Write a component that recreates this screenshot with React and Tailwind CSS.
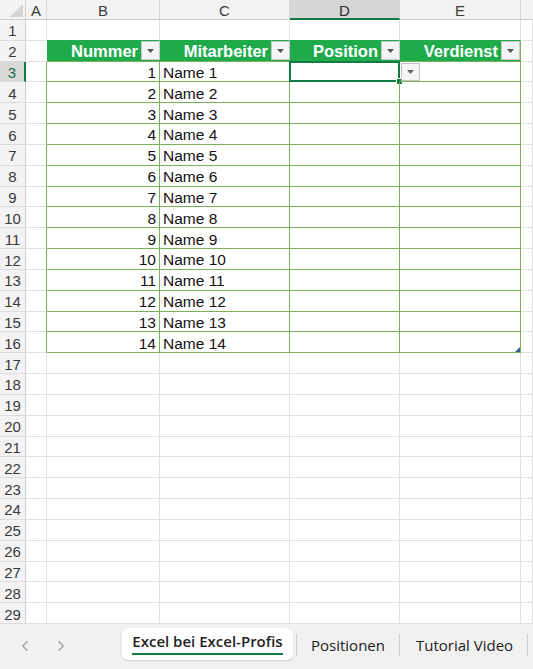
import { ChevronLeft, ChevronRight } from 'lucide-react';

/*
 * Excel sheet: a green table "Nummer / Mitarbeiter / Position / Verdienst"
 * with 14 rows, cell D3 selected, and the sheet tabs at the bottom.
 */

const ROW_H = 'h-[20.84px]';
const font = { fontFamily: '"Liberation Sans", Arial, sans-serif' };
const uiFont = { fontFamily: '"Open Sans", "Noto Sans", sans-serif' };

const rows = Array.from({ length: 29 }, (_, i) => i + 1);

function FilterButton() {
    return (
        <div className="w-[19px] h-[19px] shrink-0 bg-[#f4f4f4] border border-[#c9c9c9] flex items-center justify-center">
            <svg width="7" height="4" viewBox="0 0 7 4">
                <path d="M0 0 L7 0 L3.5 4 Z" fill="#555" />
            </svg>
        </div>
    );
}

function HeaderCell({ label, width, last }) {
    return (
        <div
            className={`${width} h-full flex items-center justify-end gap-[3px] bg-[#1fab4c] border-b border-[#78b35a] ${last ? 'border-r border-r-[#78b35a]' : ''}`}
        >
            <span className="text-white font-bold text-[16.5px] leading-none translate-y-[1px]" style={font}>{label}</span>
            <FilterButton />
        </div>
    );
}

function RowHeader({ n }) {
    const selected = n === 3;
    return (
        <div
            className={`w-[26px] shrink-0 h-full flex items-center justify-center pt-[2px] border-b border-[#dcdcdc] text-[15px] leading-none
            ${selected ? 'bg-[#d9d9d9] border-r-2 border-r-[#107c41] text-[#1d6b3e]' : 'bg-[#f3f3f3] border-r border-r-[#cfcfcf] text-[#3a3a3a]'}`}
            style={font}
        >
            {n}
        </div>
    );
}

function SheetRow({ n }) {
    const inTable = n >= 3 && n <= 16;
    const grid = 'border-r border-b border-[#e1e1e1]';
    const tbl = 'border-r border-b border-[#78b35a]';

    if (n === 2) {
        return (
            <div className={`flex ${ROW_H}`}>
                <RowHeader n={n} />
                <div className="w-[21px] h-full border-b border-[#e1e1e1]" />
                <HeaderCell label="Nummer" width="w-[113px]" />
                <HeaderCell label="Mitarbeiter" width="w-[130px]" />
                <HeaderCell label="Position" width="w-[110px]" />
                <HeaderCell label="Verdienst" width="w-[121px]" last />
                <div className={`flex-1 h-full ${grid}`} />
            </div>
        );
    }

    const bottomB = n === 1 ? 'border-r border-b border-r-[#e1e1e1] border-b-[#1fab4c]' : inTable ? tbl : grid;

    return (
        <div className={`flex ${ROW_H}`} style={font}>
            <RowHeader n={n} />
            <div className={`w-[21px] h-full border-r border-b border-b-[#e1e1e1] ${inTable ? 'border-r-[#78b35a]' : 'border-r-[#e1e1e1]'}`} />
            <div className={`w-[113px] h-full flex items-center justify-end pr-[3px] pt-[2px] text-[15.5px] text-[#111] ${bottomB}`}>
                {inTable ? n - 2 : ''}
            </div>
            <div className={`w-[130px] h-full flex items-center pl-[3px] pt-[2px] text-[15.5px] text-[#111] ${bottomB}`}>
                {inTable ? `Name ${n - 2}` : ''}
            </div>
            <div className={`w-[110px] h-full relative ${bottomB}`}>
                {n === 3 && (
                    <>
                        <div className="absolute -left-px -top-px -right-px -bottom-px border-2 border-[#107c41]" />
                        <div className="absolute -right-[4px] -bottom-[4px] w-[7px] h-[7px] bg-[#107c41] border border-white" />
                    </>
                )}
            </div>
            <div className={`w-[121px] h-full relative ${bottomB}`}>
                {n === 3 && (
                    <div className="absolute left-px top-[1px] w-[19px] h-[18px] bg-[#f6f6f6] border border-[#c3c3c3] flex items-center justify-center">
                        <svg width="7" height="4" viewBox="0 0 7 4">
                            <path d="M0 0 L7 0 L3.5 4 Z" fill="#666" />
                        </svg>
                    </div>
                )}
                {n === 16 && (
                    <svg className="absolute right-0 bottom-0" width="5" height="5" viewBox="0 0 5 5">
                        <path d="M5 0 L5 5 L0 5 Z" fill="#2f5f8f" />
                    </svg>
                )}
            </div>
            <div className={`flex-1 h-full ${grid}`} />
        </div>
    );
}

function ColumnHeaders() {
    const cols = [
        ['A', 'w-[21px]'],
        ['B', 'w-[113px]'],
        ['C', 'w-[130px]'],
        ['D', 'w-[110px]'],
        ['E', 'w-[121px]'],
    ];
    return (
        <div className="flex h-[20px]" style={font}>
            <div className="w-[26px] h-full bg-[#f3f3f3] border-r border-b border-[#cfcfcf] relative">
                <svg className="absolute right-[2px] bottom-[2px]" width="13" height="13" viewBox="0 0 13 13">
                    <path d="M13 0 L13 13 L0 13 Z" fill="#d4d4d4" />
                </svg>
            </div>
            {cols.map(([c, w]) => (
                <div
                    key={c}
                    className={`${w} h-full flex items-center justify-center pt-[2px] text-[15px] leading-none border-r border-[#d4d4d4]
                    ${c === 'D' ? 'bg-[#d6d6d6] border-b-2 border-b-[#107c41] text-[#2a2a2a]' : 'bg-[#f3f3f3] border-b border-b-[#cfcfcf] text-[#3a3a3a]'}`}
                >
                    {c}
                </div>
            ))}
            <div className="flex-1 h-full bg-[#f3f3f3] border-b border-[#cfcfcf]" />
        </div>
    );
}

function SheetTabs() {
    return (
        <div className="flex-1 bg-[#f1f1f1] flex items-start" style={uiFont}>
            <div className="w-[122px] h-full flex items-center pl-[16px] gap-[18px] text-[#9a9a9a] pb-[2px]">
                <ChevronLeft size={18} strokeWidth={1.5} />
                <ChevronRight size={18} strokeWidth={1.5} />
            </div>
            <div className="mt-[4px] w-[171px] h-[32px] bg-white rounded-md shadow-[0_1px_2px_rgba(0,0,0,0.15)] flex items-center justify-center">
                <span className="relative text-[15px] font-semibold text-[#222] leading-none pb-[4px] border-b-2 border-[#107c41]">
                    Excel bei Excel-Profis
                </span>
            </div>
            <div className="ml-[3px] mt-[10px] w-px h-[22px] bg-[#cfcfcf]" />
            <div className="h-full flex items-center pl-[14px] pr-[14px] pb-[2px] text-[15px] text-[#222]">Positionen</div>
            <div className="mt-[10px] w-px h-[22px] bg-[#cfcfcf]" />
            <div className="h-full flex items-center pl-[16px] pr-[14px] pb-[2px] text-[15px] text-[#222]">Tutorial Video</div>
            <div className="mt-[10px] w-px h-[22px] bg-[#cfcfcf]" />
        </div>
    );
}

export default function App() {
    return (
        <div className="w-[533px] h-[669px] bg-white flex flex-col overflow-hidden">
            <ColumnHeaders />
            {rows.map(n => (
                <SheetRow key={n} n={n} />
            ))}
            <SheetTabs />
        </div>
    );
}
